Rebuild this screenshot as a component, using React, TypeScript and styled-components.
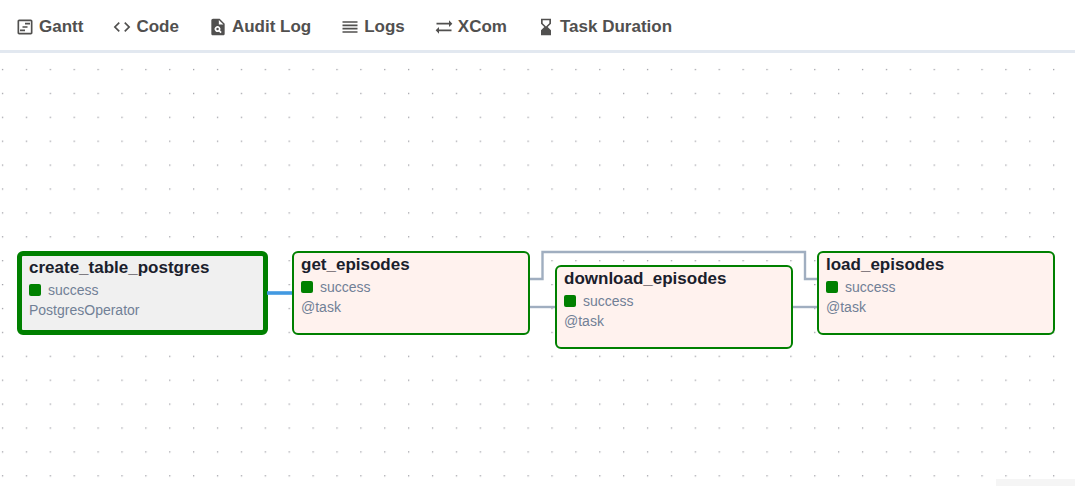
import React from 'react';
import styled, { createGlobalStyle } from 'styled-components';
import {
  MdCode,
  MdHourglassBottom,
  MdOutlineViewTimeline,
  MdPlagiarism,
  MdReorder,
  MdSyncAlt,
} from 'react-icons/md';

const GlobalStyle = createGlobalStyle`
  *, *::before, *::after { box-sizing: border-box; }
  body {
    margin: 0;
    background: #ffffff;
    font-family: "Liberation Sans", Arial, sans-serif;
  }
`;

const Page = styled.div`
  display: flex;
  flex-direction: column;
  min-height: 100vh;
`;

const TabBar = styled.nav`
  display: flex;
  align-items: center;
  gap: 29px;
  height: 53px;
  padding: 0 15px;
  border-bottom: 3px solid #e2e8f0;
`;

const Tab = styled.button`
  display: flex;
  align-items: center;
  gap: 4px;
  padding: 3px 0 0;
  border: 0;
  background: none;
  color: #51504f;
  font-family: inherit;
  font-size: 17px;
  font-weight: 700;
  line-height: 24px;
  white-space: nowrap;
  cursor: pointer;

  svg {
    flex: none;
    width: 20px;
    height: 20px;
  }
`;

const Canvas = styled.main`
  position: relative;
  flex: 1;
  min-height: 433px;
  overflow: hidden;
`;

const Layer = styled.svg`
  position: absolute;
  inset: 0;
  width: 100%;
  height: 100%;
`;

const Node = styled.article<{ $x: number; $y: number; $selected?: boolean }>`
  position: absolute;
  left: ${(p) => p.$x}px;
  top: ${(p) => p.$y}px;
  width: ${(p) => (p.$selected ? 251 : 238)}px;
  height: 84px;
  padding: 1px 7px;
  border: ${(p) => (p.$selected ? 5 : 2)}px solid #008000;
  border-radius: 6px;
  background: ${(p) => (p.$selected ? '#f0f0f0' : '#fff2ee')};
  color: #718096;
  font-size: 14px;
  line-height: 20px;
`;

const NodeTitle = styled.h2`
  margin: 0 0 1px;
  color: #1a202c;
  font-size: 17px;
  font-weight: 700;
  line-height: 22px;
`;

const Status = styled.div`
  display: flex;
  align-items: center;
  gap: 7px;
`;

const Swatch = styled.span`
  width: 12px;
  height: 12px;
  border-radius: 2px;
  background: #008000;
`;

const Operator = styled.div``;

const Attribution = styled.div`
  position: absolute;
  right: 0;
  bottom: 0;
  width: 79px;
  height: 7px;
  background: #f5f5f5;
`;

const tabs = [
  { label: 'Gantt', Icon: MdOutlineViewTimeline },
  { label: 'Code', Icon: MdCode },
  { label: 'Audit Log', Icon: MdPlagiarism },
  { label: 'Logs', Icon: MdReorder },
  { label: 'XCom', Icon: MdSyncAlt },
  { label: 'Task Duration', Icon: MdHourglassBottom },
];

const nodes = [
  { id: 'create_table_postgres', operator: 'PostgresOperator', x: 17, y: 198, selected: true },
  { id: 'get_episodes', operator: '@task', x: 292, y: 198 },
  { id: 'download_episodes', operator: '@task', x: 555, y: 212 },
  { id: 'load_episodes', operator: '@task', x: 817, y: 198 },
];

export default function App() {
  return (
    <Page>
      <GlobalStyle />
      <TabBar>
        {tabs.map(({ label, Icon }) => (
          <Tab key={label} type="button">
            <Icon aria-hidden="true" />
            {label}
          </Tab>
        ))}
      </TabBar>
      <Canvas>
        <Layer aria-hidden="true">
          <defs>
            <pattern id="dots" x="1.9" y="15.9" width="23.89" height="23.9" patternUnits="userSpaceOnUse">
              <circle cx="0.7" cy="0.7" r="0.65" fill="#81818a" />
            </pattern>
          </defs>
          <rect width="100%" height="100%" fill="url(#dots)" />
        </Layer>
        {nodes.map((n) => (
          <Node key={n.id} $x={n.x} $y={n.y} $selected={n.selected}>
            <NodeTitle>{n.id}</NodeTitle>
            <Status>
              <Swatch />
              success
            </Status>
            <Operator>{n.operator}</Operator>
          </Node>
        ))}
        <Layer aria-hidden="true" fill="none" stroke="#a0aec0" strokeWidth="2.4" pointerEvents="none">
          <path d="M267 240H292" stroke="#4299e1" strokeWidth="3.6" />
          <path d="M530 226H542.5V199H805V226H817" />
          <path d="M530 254H555" />
          <path d="M793 254H817" />
        </Layer>
        <Attribution />
      </Canvas>
    </Page>
  );
}
